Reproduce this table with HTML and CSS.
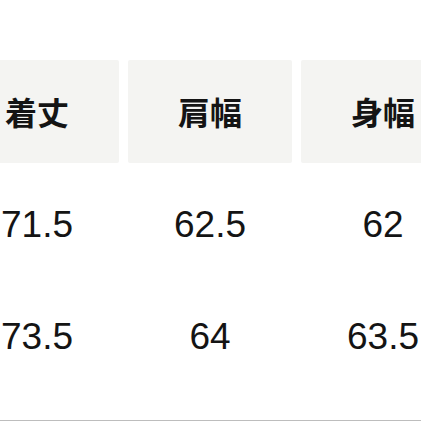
FILE: index.html
```html
<!DOCTYPE html>
<html lang="ja">
<head>
<meta charset="utf-8">
<link rel="stylesheet" href="styles.css">
</head>
<body>
<div class="page">
  <div class="size-table">
    <div class="th">着丈</div>
    <div class="th">肩幅</div>
    <div class="th">身幅</div>
    <div class="td">71.5</div>
    <div class="td">62.5</div>
    <div class="td">62</div>
    <div class="td">73.5</div>
    <div class="td">64</div>
    <div class="td">63.5</div>
  </div>
  <div class="rule"></div>
</div>
</body>
</html>
```
FILE: styles.css
```css
html, body {
  margin: 0;
  padding: 0;
  background: #ffffff;
}
.page {
  width: 421px;
  height: 421px;
  overflow: hidden;
}
.size-table {
  margin-left: -45px;
  padding-top: 60px;
  display: grid;
  grid-template-columns: repeat(3, 164px);
  column-gap: 9px;
}
.th {
  height: 103px;
  margin-bottom: 5px;
  background: #f4f4f2;
  border-radius: 2px;
  display: flex;
  align-items: center;
  justify-content: center;
  font-family: "Noto Sans CJK JP", sans-serif;
  font-weight: 700;
  font-size: 32px;
  line-height: 1;
  color: #141414;
  padding-bottom: 1px;
  box-sizing: border-box;
}
.td {
  height: 112px;
  display: flex;
  align-items: center;
  justify-content: center;
  font-family: "Liberation Sans", Arial, sans-serif;
  font-size: 37px;
  line-height: 1;
  color: #141414;
}
.rule {
  margin-top: 28px;
  border-top: 1px solid #bdbdbd;
  width: 421px;
}
```
